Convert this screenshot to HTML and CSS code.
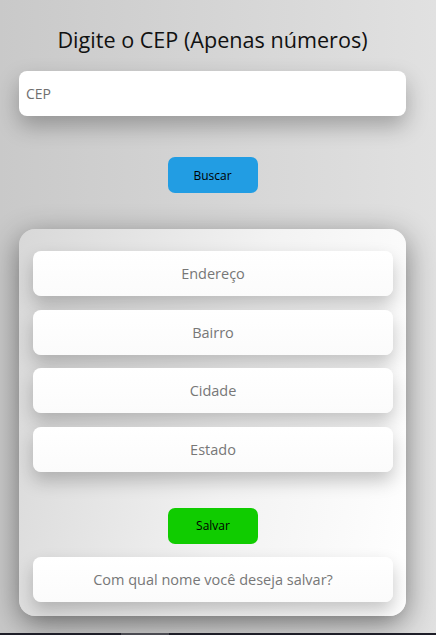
FILE: index.html
```html
<!DOCTYPE html>
<html lang="pt-BR">
<head>
<meta charset="utf-8">
<title>CEP</title>
<link rel="stylesheet" href="styles.css">
</head>
<body>
<main class="page">
  <h1 class="title">Digite o CEP (Apenas números)</h1>
  <input class="cep-input" type="text" placeholder="CEP">
  <div class="btn-row"><button class="btn btn-blue">Buscar</button></div>
  <section class="panel">
    <input class="field" type="text" placeholder="Endereço">
    <input class="field" type="text" placeholder="Bairro">
    <input class="field" type="text" placeholder="Cidade">
    <input class="field" type="text" placeholder="Estado">
    <div class="btn-row save-row"><button class="btn btn-green">Salvar</button></div>
    <input class="field" type="text" placeholder="Com qual nome você deseja salvar?">
  </section>
</main>
<div class="scrollbar"><div class="thumb"></div></div>
</body>
</html>
```
FILE: styles.css
```css
html, body {
  margin: 0;
  padding: 0;
}
body {
  width: 436px;
  height: 635px;
  overflow: hidden;
  background: linear-gradient(to right, #c9c9c9, #e1e1e1);
  font-family: "Open Sans", "Noto Sans", sans-serif;
  display: flex;
  flex-direction: column;
}
.page {
  padding: 0 30px 0 19px;
  display: flex;
  flex-direction: column;
}
.title {
  margin: 25px 0 16px;
  width: 387px;
  font-size: 21.6px;
  line-height: 30px;
  font-weight: 400;
  color: #111;
  text-align: center;
}
.cep-input {
  box-sizing: border-box;
  width: 387px;
  height: 45px;
  border: none;
  border-radius: 8px;
  background: #fff;
  padding: 0 7px;
  font-family: inherit;
  font-size: 14px;
  color: #333;
  box-shadow: 0 10px 22px rgba(0, 0, 0, 0.28);
  outline: none;
}
.cep-input::placeholder {
  color: #6f6f6f;
}
.btn-row {
  display: flex;
  justify-content: center;
  width: 387px;
  margin: 41px 0 36px;
}
.btn {
  width: 90px;
  height: 36px;
  border: none;
  border-radius: 7px;
  font-family: inherit;
  font-size: 12px;
  color: #000;
  padding: 0;
}
.btn-blue {
  background: #229de3;
}
.btn-green {
  background: #10cc00;
}
.panel {
  box-sizing: border-box;
  width: 387px;
  padding: 22px 13px 14px 14px;
  border-radius: 16px;
  background: linear-gradient(100deg, #d8d8d8 0%, #f2f2f2 55%, #ffffff 100%);
  box-shadow: 0 8px 30px rgba(0, 0, 0, 0.45);
  display: flex;
  flex-direction: column;
  gap: 13.67px;
}
.field {
  box-sizing: border-box;
  width: 360px;
  height: 45px;
  border: none;
  border-radius: 8px;
  background: linear-gradient(to bottom, #ffffff, #fbfbfb);
  font-family: inherit;
  font-size: 14.5px;
  text-align: center;
  color: #333;
  box-shadow: 0 9px 18px rgba(0, 0, 0, 0.22);
  outline: none;
}
.field::placeholder {
  color: #777;
}
.save-row {
  width: 360px;
  margin: 22px 0 -0.67px;
}
.scrollbar {
  margin-top: 17px;
  height: 10px;
  background: #1e1e28;
  display: flex;
  padding-left: 121px;
}
.thumb {
  width: 48px;
  height: 10px;
  background: #4b4b52;
}
```
